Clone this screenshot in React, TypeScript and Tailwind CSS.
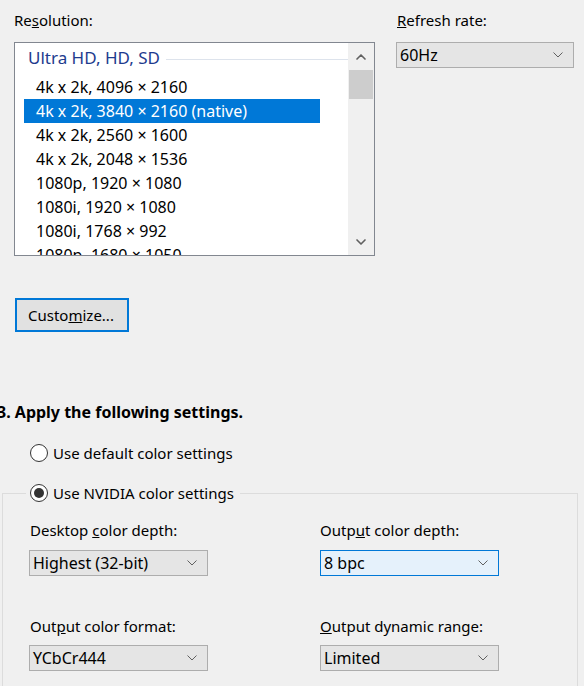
import { ChevronDown, ChevronUp } from 'lucide-react';

const resolutions = [
  '4k x 2k, 4096 × 2160',
  '4k x 2k, 3840 × 2160 (native)',
  '4k x 2k, 2560 × 1600',
  '4k x 2k, 2048 × 1536',
  '1080p, 1920 × 1080',
  '1080i, 1920 × 1080',
  '1080i, 1768 × 992',
  '1080p, 1680 × 1050',
];

const selected = 1;

function Chevron() {
  return (
    <svg width="10" height="6" viewBox="0 0 10 6" className="shrink-0">
      <path d="M0.5 0.5 L5 5 L9.5 0.5" fill="none" stroke="#606060" strokeWidth="1" />
    </svg>
  );
}

function Select({ value, focused = false, className = '' }: { value: string; focused?: boolean; className?: string }) {
  return (
    <div
      className={`flex h-[26px] items-center justify-between border pl-[3px] pr-[10px] text-[16px] ${
        focused ? 'border-[#0078d7] bg-[#e5f1fb]' : 'border-[#adadad] bg-[#e5e5e5]'
      } ${className}`}
    >
      <span>{value}</span>
      <Chevron />
    </div>
  );
}

function Radio({ checked, label }: { checked: boolean; label: string }) {
  return (
    <div className="flex h-5 items-center gap-[5px]">
      <span className="flex h-[18px] w-[18px] shrink-0 items-center justify-center rounded-full border border-[#333] bg-white">
        {checked && <span className="h-[10px] w-[10px] rounded-full bg-[#333]" />}
      </span>
      <span>{label}</span>
    </div>
  );
}

export default function App() {
  return (
    <div
      className="h-[686px] w-[584px] overflow-hidden bg-[#f0f0f0] text-[15px] leading-5 text-black"
      style={{ fontFamily: '"Noto Sans", "Open Sans", sans-serif' }}
    >
      {/* Resolution + refresh rate */}
      <div className="flex pt-[10px]">
        <div className="ml-[14px] w-[361px]">
          <div className="mb-[12px]">
            Re<u>s</u>olution:
          </div>
          <div className="flex h-[214px] border border-[#828790] bg-white text-[16px]">
            <div className="flex-1 overflow-hidden pl-[9px]">
              <div className="flex h-[32px] items-start pl-[4px] pt-[5px]">
                <span className="text-[17px] text-[#1e3b8e]">Ultra HD, HD, SD</span>
                <span className="ml-[6px] mt-[11px] h-px flex-1 bg-[#dde3ec]" />
              </div>
              {resolutions.map((r, i) => (
                <div
                  key={r}
                  className={`flex h-6 w-[296px] items-center pl-[12px] ${
                    i === selected ? 'bg-[#0078d7] text-white' : ''
                  }`}
                >
                  {r}
                </div>
              ))}
            </div>
            <div className="flex w-[26px] flex-col bg-[#f0f0f0] px-[1px]">
              <div className="flex h-[27px] items-center justify-center text-[#606060]">
                <ChevronUp size={16} strokeWidth={2.5} />
              </div>
              <div className="h-[29px] bg-[#cdcdcd]" />
              <div className="flex-1" />
              <div className="flex h-[26px] items-center justify-center text-[#606060]">
                <ChevronDown size={16} strokeWidth={2.5} />
              </div>
            </div>
          </div>
        </div>
        <div className="ml-[21px] w-[178px]">
          <div className="mb-[12px] pl-px">
            <u>R</u>efresh rate:
          </div>
          <Select value="60Hz" />
        </div>
      </div>

      {/* Customize */}
      <div className="ml-[15px] mt-[42px]">
        <button className="h-[34px] w-[114px] border-2 border-[#0078d7] bg-[#e1e1e1] pl-[11px] text-left">
          Custo<u>m</u>ize...
        </button>
      </div>

      {/* Step 3 */}
      <div className="-ml-[3px] mt-[70px] text-[16px] font-bold">3. Apply the following settings.</div>

      <div className="ml-[30px] mt-[21px]">
        <Radio checked={false} label="Use default color settings" />
      </div>

      <fieldset className="ml-[2px] mt-[20px] h-[300px] w-[576px] border border-[#dcdcdc] pl-[27px]">
        <legend className="-ml-[4px] bg-[#f0f0f0] pl-[4px] pr-[6px]">
          <Radio checked label="Use NVIDIA color settings" />
        </legend>
        <div className="-ml-px mt-[17px] grid grid-cols-[179px_179px] gap-x-[112px]">
          <div>
            <div className="mb-[10px] pl-px">
              Desktop <u>c</u>olor depth:
            </div>
            <Select value="Highest (32-bit)" />
          </div>
          <div>
            <div className="mb-[10px]">
              Outp<u>u</u>t color depth:
            </div>
            <Select value="8 bpc" focused />
          </div>
          <div className="mt-[40px]">
            <div className="mb-[9px] pl-px">
              Out<u>p</u>ut color format:
            </div>
            <Select value="YCbCr444" />
          </div>
          <div className="mt-[40px]">
            <div className="mb-[9px]">
              <u>O</u>utput dynamic range:
            </div>
            <Select value="Limited" />
          </div>
        </div>
      </fieldset>
    </div>
  );
}
